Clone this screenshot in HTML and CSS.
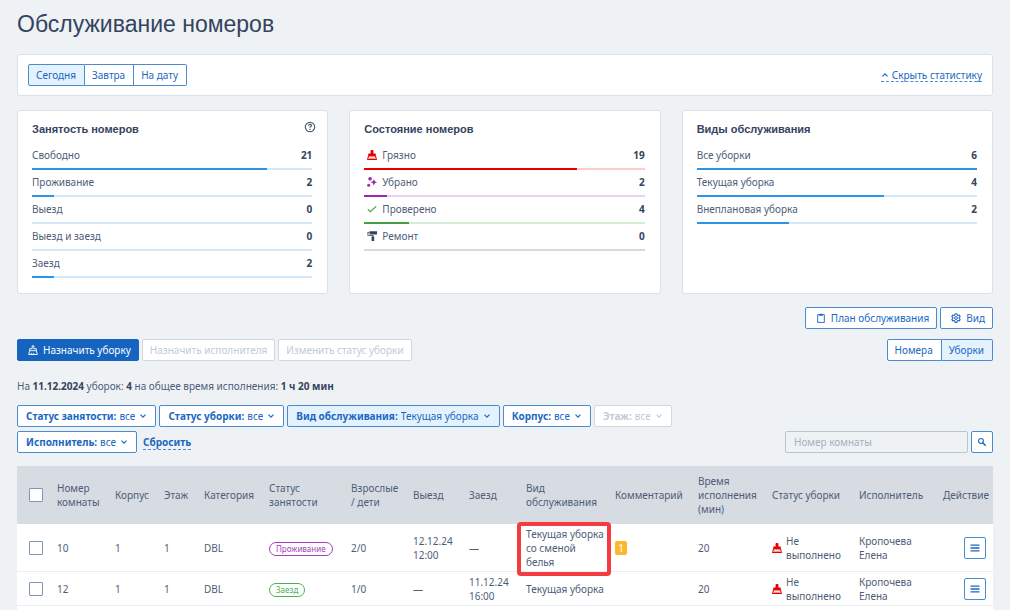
FILE: index.html
```html
<!DOCTYPE html>
<html lang="ru">
<head>
<meta charset="utf-8">
<meta name="viewport" content="width=device-width, initial-scale=1">
<title>Обслуживание номеров</title>
<link rel="stylesheet" href="styles.css">
</head>
<body>
<svg class="sprite" aria-hidden="true">
  <symbol id="broom" viewBox="0 0 12 12"><path fill="currentColor" d="M4.300 1q0-1 1-1h1.400q1 0 1 1v3.300h2.800V7.200h-9V4.300h2.800z"/><path fill="none" stroke="currentColor" stroke-width="1.300" d="M1.800 7L.8 11.300h10.400L10.200 7"/><path stroke="currentColor" d="M3.500 9.200V11M5.900 9.200V11M8.300 9.200V11"/><path fill="currentColor" d="M1.500 7h9l.4 1.300H1.100z" opacity=".45"/></symbol>
  <symbol id="broom-line" viewBox="0 0 12 12"><path fill="none" stroke="currentColor" stroke-width="1.100" d="M5 4.500V1h2v3.500h3v2.300H2V4.500zM2 6.800L.8 11.400h10.400L10 6.800M4 11.400V9.500M6.500 11.400V9.500"/></symbol>
  <symbol id="sparkle" viewBox="0 0 12 12"><path fill="currentColor" d="M8.200 2.800l1.200 2.400 2.600 1.200-2.600 1.200-1.200 2.600-1.200-2.600-2.500-1.200L7 5.200z"/><circle cx="3.700" cy="2.200" r="2.200" fill="currentColor"/><circle cx="2" cy="9.800" r="1.800" fill="currentColor"/></symbol>
  <symbol id="check" viewBox="0 0 12 12"><path fill="none" stroke="currentColor" stroke-width="1.400" d="M1 6.500l3 2.700L11 2.800"/></symbol>
  <symbol id="roller" viewBox="0 0 12 12"><path fill="currentColor" d="M3 .3H12V4.200H3zM.8 1.200h1.700v1H1.600v2.500h6v1.800h1V12H5.500V6.500h1V5.700H.6V1.200z"/></symbol>
  <symbol id="chevron" viewBox="0 0 8 8"><path fill="none" stroke="currentColor" stroke-width="1.200" d="M1.500 2.700L4 5.200l2.500-2.500"/></symbol>
  <symbol id="clipboard" viewBox="0 0 12 12"><path fill="none" stroke="currentColor" stroke-width="1.100" d="M2 2h8v9.300H2z"/><path fill="currentColor" d="M3.800 1.200h1.100a1.200 1.200 0 0 1 2.200 0h1.100v2.200H3.800z"/></symbol>
  <symbol id="gear" viewBox="0 0 12 12"><path fill="none" stroke="currentColor" stroke-width="1.300" stroke-linejoin="round" d="M5 .8h2l.4 1.500 1.100.6 1.500-.4 1 1.700-1.100 1.100v1.400L11 7.800 10 9.500l-1.500-.4-1.100.6L7 11.200H5l-.4-1.500-1.100-.6-1.500.4-1-1.700 1.100-1.100V5.300L1 4.200l1-1.700 1.500.4 1.100-.6z"/><circle cx="6" cy="6" r="1.700" fill="none" stroke="currentColor" stroke-width="1.200"/></symbol>
  <symbol id="search" viewBox="0 0 12 12"><circle cx="4.700" cy="4.700" r="2.900" fill="none" stroke="currentColor" stroke-width="1.400"/><path stroke="currentColor" stroke-width="1.800" d="M7 7l3.500 3.500"/></symbol>
  <symbol id="menu" viewBox="0 0 10 8"><path stroke="currentColor" stroke-width="1.300" d="M.5 1.200h9M.5 4h9M.5 6.800h9"/></symbol>
  <symbol id="help" viewBox="0 0 12 12"><circle cx="6" cy="6" r="4.700" fill="none" stroke="currentColor" stroke-width="1.200"/><path fill="none" stroke="currentColor" stroke-width="1.200" d="M4.500 4.800q0-1.500 1.500-1.500t1.500 1.300c0 .9-1.500 1-1.500 2.200M6 7.800v1.100"/></symbol>
</svg>

<main class="page">
  <h1 class="page-title">Обслуживание номеров</h1>

  <section class="panel date-bar">
    <div class="segmented">
      <button type="button" class="segment active" aria-pressed="true">Сегодня</button>
      <button type="button" class="segment">Завтра</button>
      <button type="button" class="segment">На дату</button>
    </div>
    <a class="toggle-link" href="#stats"><svg class="chevron up"><use href="#chevron"/></svg>Скрыть статистику</a>
  </section>

  <section class="stats" id="stats">
    <article class="panel card">
      <header class="card-head"><h2 class="card-title">Занятость номеров</h2><svg class="icon help"><use href="#help"/></svg></header>
      <div class="stat"><span>Свободно</span><b>21</b></div><div class="bar"><div class="fill" style="width:84%"></div></div>
      <div class="stat"><span>Проживание</span><b>2</b></div><div class="bar"><div class="fill" style="width:8%"></div></div>
      <div class="stat"><span>Выезд</span><b>0</b></div><div class="bar"></div>
      <div class="stat"><span>Выезд и заезд</span><b>0</b></div><div class="bar"></div>
      <div class="stat"><span>Заезд</span><b>2</b></div><div class="bar"><div class="fill" style="width:8%"></div></div>
    </article>
    <article class="panel card">
      <header class="card-head"><h2 class="card-title">Состояние номеров</h2></header>
      <div class="stat"><svg class="icon red"><use href="#broom"/></svg><span>Грязно</span><b>19</b></div><div class="bar bar-red"><div class="fill" style="width:76%"></div></div>
      <div class="stat"><svg class="icon purple"><use href="#sparkle"/></svg><span>Убрано</span><b>2</b></div><div class="bar bar-purple"><div class="fill" style="width:8%"></div></div>
      <div class="stat"><svg class="icon green"><use href="#check"/></svg><span>Проверено</span><b>4</b></div><div class="bar bar-green"><div class="fill" style="width:16%"></div></div>
      <div class="stat"><svg class="icon dark"><use href="#roller"/></svg><span>Ремонт</span><b>0</b></div><div class="bar bar-gray"></div>
    </article>
    <article class="panel card">
      <header class="card-head"><h2 class="card-title">Виды обслуживания</h2></header>
      <div class="stat"><span>Все уборки</span><b>6</b></div><div class="bar"><div class="fill" style="width:100%"></div></div>
      <div class="stat"><span>Текущая уборка</span><b>4</b></div><div class="bar"><div class="fill" style="width:67%"></div></div>
      <div class="stat"><span>Внеплановая уборка</span><b>2</b></div><div class="bar"><div class="fill" style="width:33%"></div></div>
    </article>
  </section>

  <div class="tools">
    <button type="button" class="btn"><svg class="icon"><use href="#clipboard"/></svg>План обслуживания</button>
    <button type="button" class="btn"><svg class="icon"><use href="#gear"/></svg>Вид</button>
  </div>

  <div class="actions">
    <button type="button" class="btn primary"><svg class="icon"><use href="#broom-line"/></svg>Назначить уборку</button>
    <button type="button" class="btn" disabled>Назначить исполнителя</button>
    <button type="button" class="btn" disabled>Изменить статус уборки</button>
    <div class="segmented push">
      <button type="button" class="segment">Номера</button>
      <button type="button" class="segment active" aria-pressed="true">Уборки</button>
    </div>
  </div>

  <p class="summary">На <b>11.12.2024</b> уборок: <b>4</b> на общее время исполнения: <b>1 ч 20 мин</b></p>

  <div class="filter-bar">
    <div class="filters">
      <label class="filter"><b>Статус занятости:</b><select><option>все</option></select><svg class="chevron"><use href="#chevron"/></svg></label>
      <label class="filter"><b>Статус уборки:</b><select><option>все</option></select><svg class="chevron"><use href="#chevron"/></svg></label>
      <label class="filter selected"><b>Вид обслуживания:</b><select><option>Текущая уборка</option></select><svg class="chevron"><use href="#chevron"/></svg></label>
      <label class="filter"><b>Корпус:</b><select><option>все</option></select><svg class="chevron"><use href="#chevron"/></svg></label>
      <label class="filter off"><b>Этаж:</b><select disabled><option>все</option></select><svg class="chevron"><use href="#chevron"/></svg></label>
      <label class="filter"><b>Исполнитель:</b><select><option>все</option></select><svg class="chevron"><use href="#chevron"/></svg></label>
      <a class="reset" href="#reset">Сбросить</a>
    </div>
    <form class="search">
      <input class="search-input" type="text" placeholder="Номер комнаты" aria-label="Номер комнаты">
      <button type="button" class="square" aria-label="Найти"><svg class="icon"><use href="#search"/></svg></button>
    </form>
  </div>

  <div class="table-wrap">
    <table class="rooms">
      <colgroup>
        <col class="c-check"><col class="c-room"><col class="c-building"><col class="c-floor"><col class="c-category"><col class="c-status"><col class="c-guests"><col class="c-out"><col class="c-in"><col class="c-service"><col class="c-comment"><col class="c-time"><col class="c-clean"><col class="c-person"><col class="c-action">
      </colgroup>
      <thead>
        <tr>
          <th><input class="check" type="checkbox" aria-label="Выбрать все"></th>
          <th>Номер<br>комнаты</th><th>Корпус</th><th>Этаж</th><th>Категория</th><th>Статус<br>занятости</th><th>Взрослые<br>/ дети</th><th>Выезд</th><th>Заезд</th><th>Вид<br>обслуживания</th><th>Комментарий</th><th>Время<br>исполнения<br>(мин)</th><th>Статус уборки</th><th>Исполнитель</th><th>Действие</th>
        </tr>
      </thead>
      <tbody>
        <tr>
          <td><input class="check" type="checkbox" aria-label="Выбрать номер 10"></td>
          <td>10</td><td>1</td><td>1</td><td>DBL</td>
          <td><span class="tag tag-purple">Проживание</span></td>
          <td>2/0</td><td>12.12.24<br>12:00</td><td>—</td>
          <td class="marked">Текущая уборка<br>со сменой<br>белья</td>
          <td><span class="count">1</span></td><td>20</td>
          <td><div class="clean"><svg class="icon red"><use href="#broom"/></svg><span>Не<br>выполнено</span></div></td>
          <td>Кропочева<br>Елена</td>
          <td><button type="button" class="square" aria-label="Действия"><svg class="menu"><use href="#menu"/></svg></button></td>
        </tr>
        <tr>
          <td><input class="check" type="checkbox" aria-label="Выбрать номер 12"></td>
          <td>12</td><td>1</td><td>1</td><td>DBL</td>
          <td><span class="tag tag-green">Заезд</span></td>
          <td>1/0</td><td>—</td><td>11.12.24<br>16:00</td>
          <td>Текущая уборка</td>
          <td></td><td>20</td>
          <td><div class="clean"><svg class="icon red"><use href="#broom"/></svg><span>Не<br>выполнено</span></div></td>
          <td>Кропочева<br>Елена</td>
          <td><button type="button" class="square" aria-label="Действия"><svg class="menu"><use href="#menu"/></svg></button></td>
        </tr>
      </tbody>
    </table>
  </div>
</main>
</body>
</html>
```
FILE: styles.css
```css
:root {
  --blue: #1b68c1;
  --line-blue: #4a8bd4;
  --pale-blue: #e3f2fd;
  --text: #4e5d78;
  --dark: #34435e;
  --border: #dbe1ea;
  --muted: #c2cad8;
}
* { box-sizing: border-box; }
body {
  margin: 0;
  background: #eef2f5;
  color: var(--text);
  font: 10px/14px "Noto Sans", "Open Sans", sans-serif;
}
button, input, select { font: inherit; color: inherit; }
b { font-weight: 700; }
.sprite { position: absolute; width: 0; height: 0; }
.icon { width: 10px; height: 10px; flex: none; }
.chevron { width: 8px; height: 8px; flex: none; }
.up { transform: rotate(180deg); }
.red { color: #e60000; }
.purple { color: #9c27b0; }
.green { color: #43a047; }
.dark { color: var(--dark); }

.page {
  min-height: 100vh;
  padding: 8px 17px 0;
  display: flex;
  flex-direction: column;
}
.page-title {
  margin: 0 0 14px;
  font: 400 23px/32px "Liberation Sans", Arial, sans-serif;
  color: var(--dark);
}
.panel {
  background: #fff;
  border: 1px solid var(--border);
  border-radius: 3px;
}
.date-bar {
  display: flex;
  align-items: center;
  justify-content: space-between;
  padding: 9px 10px;
  margin-bottom: 14px;
}
.segmented { display: flex; }
.segment {
  height: 22px;
  padding: 0 8px 0 7px;
  border: 1px solid var(--line-blue);
  background: #fff;
  color: var(--blue);
}
.segment + .segment { border-left: 0; }
.segment:first-child { border-radius: 2px 0 0 2px; }
.segment:last-child { border-radius: 0 2px 2px 0; }
.segment.active { background: var(--pale-blue); }
.toggle-link {
  display: flex;
  align-items: center;
  gap: 3px;
  height: 14px;
  color: var(--blue);
  text-decoration: none;
  border-bottom: 1px dashed var(--line-blue);
}

.stats {
  display: grid;
  grid-template-columns: repeat(3, 1fr);
  gap: 21px;
  margin-bottom: 13px;
}
.card { padding: 10px 15px 13px 14px; }
.card-head {
  display: flex;
  justify-content: space-between;
  margin-bottom: 8px;
}
.card-title {
  margin: 0;
  font: 700 11px/16px "Liberation Sans", Arial, sans-serif;
  color: var(--dark);
}
.help { width: 12px; height: 12px; margin-right: -4px; }
.stat {
  display: flex;
  align-items: center;
  height: 20px;
  gap: 5px;
}
.stat .icon { margin-left: 3px; }
.stat b { margin-left: auto; color: var(--dark); }
.bar {
  height: 2px;
  margin: 3px 0 2px;
  background: #d3e9fa;
}
.fill { height: 2px; background: #2b95e9; }
.bar-red { background: #fccccf; }
.bar-red .fill { background: #e60000; }
.bar-purple { background: #ead3ef; }
.bar-purple .fill { background: #9c27b0; }
.bar-green { background: #d5edd6; }
.bar-green .fill { background: #43a047; }
.bar-gray { background: #d5dae1; }

.tools, .actions { display: flex; gap: 3px; }
.tools { justify-content: flex-end; margin-bottom: 10px; }
.actions { margin-bottom: 18px; }
.push { margin-left: auto; }
.btn {
  display: flex;
  align-items: center;
  gap: 5px;
  height: 22px;
  padding: 0 7px;
  border: 1px solid var(--line-blue);
  border-radius: 2px;
  background: #fff;
  color: var(--blue);
}
.btn .icon { margin-left: 3px; }
.btn:disabled { border-color: #cfd7e5; color: var(--muted); }
.primary { background: #1565c0; border-color: #1565c0; color: #fff; }

.summary { margin: 0 0 12px; }
.summary b { color: var(--dark); }
.filter-bar {
  display: flex;
  align-items: flex-end;
  margin-bottom: 13px;
}
.filters {
  flex: 1;
  display: flex;
  flex-wrap: wrap;
  align-items: center;
  gap: 4px 3px;
}
.filter {
  display: flex;
  align-items: center;
  height: 22px;
  padding: 0 8px;
  border: 1px solid var(--line-blue);
  border-radius: 2px;
  background: #fff;
  color: var(--blue);
}
.filter select {
  appearance: none;
  margin: 0 4px 0 3px;
  padding: 0;
  border: 0;
  background: none;
  opacity: 1;
}
.selected { background: var(--pale-blue); }
.off { border-color: #cfd7e5; color: var(--muted); }
.reset {
  margin-left: 3px;
  color: var(--blue);
  font-weight: 700;
  text-decoration: none;
  border-bottom: 1px dashed var(--line-blue);
}
.search { display: flex; gap: 3px; }
.search-input {
  width: 183px;
  height: 22px;
  padding: 0 8px;
  border: 1px solid #b9c4d5;
  border-radius: 2px;
  background: transparent;
}
.search-input::placeholder { color: #a5b0c0; opacity: 1; }
.square {
  display: flex;
  align-items: center;
  justify-content: center;
  width: 22px;
  height: 22px;
  padding: 0;
  border: 1px solid var(--line-blue);
  border-radius: 2px;
  background: #fff;
  color: var(--blue);
}
.menu { width: 10px; height: 8px; }

.table-wrap {
  flex: 1;
  background: #fff;
}
.rooms {
  width: 100%;
  table-layout: fixed;
  border-collapse: collapse;
}
.c-check { width: 40px; }
.c-room { width: 58px; }
.c-building { width: 49px; }
.c-floor { width: 40px; }
.c-category { width: 65px; }
.c-status { width: 82px; }
.c-guests { width: 62px; }
.c-out { width: 56px; }
.c-in { width: 57px; }
.c-service { width: 89px; }
.c-comment { width: 83px; }
.c-time { width: 74px; }
.c-clean { width: 87px; }
.c-person { width: 84px; }
.c-action { width: 50px; }
.rooms th {
  padding: 8px 0;
  background: #d7dbe2;
  font-weight: 400;
  text-align: left;
}
.rooms td {
  padding: 3px 0 2px;
  border-bottom: 1px solid #e9ecf0;
}
.rooms tbody tr { height: 34px; }
.rooms th:first-child, .rooms td:first-child { padding-left: 12px; }
.rooms td:last-child { padding-left: 21px; }
.check {
  appearance: none;
  display: block;
  width: 14px;
  height: 14px;
  margin: 0;
  border: 1px solid #7f95b8;
  border-radius: 1px;
  background: #fff;
}
.tag {
  display: inline-block;
  height: 14px;
  padding: 0 6px;
  border: 1px solid currentColor;
  border-radius: 7px;
  font-size: 8px;
  line-height: 12px;
  vertical-align: middle;
}
.tag-purple { color: #a63db8; }
.tag-green { color: #4caf50; }
.count {
  display: block;
  width: 12px;
  height: 14px;
  border-radius: 2px;
  background: #fdb92e;
  color: #fff;
  text-align: center;
}
.clean { display: flex; align-items: center; gap: 4px; }
.rooms .marked { position: relative; }
.marked::after {
  content: "";
  position: absolute;
  inset: -2px 4px -5px -9px;
  border: 4px solid #f43b3f;
  border-radius: 4px;
}
```
